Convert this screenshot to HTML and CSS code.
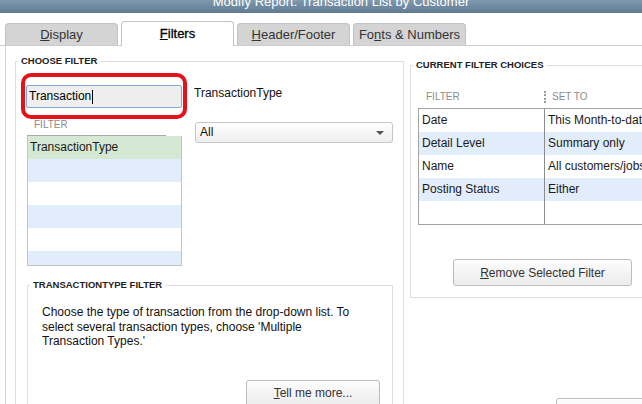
FILE: index.html
```html
<!DOCTYPE html>
<html>
<head>
<meta charset="utf-8" />
<title>Modify Report: Transaction List by Customer</title>
<link rel="stylesheet" href="styles.css">
</head>
<body>
<div class="dialog">
	<div class="titlebar">Modify Report: Transaction List by Customer</div>
	<div class="tabs">
		<div class="tab"><u>D</u>isplay</div>
		<div class="tab active"><u>F</u>ilters</div>
		<div class="tab"><u>H</u>eader/Footer</div>
		<div class="tab">Fo<u>n</u>ts &amp; Numbers</div>
	</div>
	<div class="panel">
		<fieldset class="group choose">
			<legend>Choose Filter</legend>
			<div class="choose_grid">
				<div class="search_mark">
					<div class="search">Transaction<span class="caret"></span></div>
				</div>
				<div class="field_label">TransactionType</div>
				<div class="filter_list">
					<div class="list_head">FILTER</div>
					<ul class="list">
						<li class="sel">TransactionType</li>
						<li class="alt"></li>
						<li></li>
						<li class="alt"></li>
						<li></li>
						<li class="alt"></li>
					</ul>
				</div>
				<div class="select">All<span class="arrow"></span></div>
			</div>
			<fieldset class="group detail">
				<legend>TransactionType Filter</legend>
				<p>Choose the type of transaction from the drop-down list. To select several transaction types, choose 'Multiple Transaction Types.'</p>
				<div class="btn_row"><button class="btn more"><u>T</u>ell me more...</button></div>
			</fieldset>
		</fieldset>
		<div class="right_col">
			<fieldset class="group current">
				<legend>Current Filter Choices</legend>
				<div class="cur_head">
					<div class="c1">FILTER</div>
					<div class="c2">SET TO</div>
				</div>
				<div class="cur_table">
					<div class="row"><div class="k">Date</div><div class="v">This Month-to-date</div></div>
					<div class="row alt"><div class="k">Detail Level</div><div class="v">Summary only</div></div>
					<div class="row"><div class="k">Name</div><div class="v">All customers/jobs</div></div>
					<div class="row alt"><div class="k">Posting Status</div><div class="v">Either</div></div>
					<div class="row"><div class="k"></div><div class="v"></div></div>
				</div>
				<button class="btn remove"><u>R</u>emove Selected Filter</button>
			</fieldset>
			<button class="btn bottom"></button>
		</div>
	</div>
</div>
</body>
</html>
```
FILE: styles.css
```css
*{box-sizing: border-box;}
html,body{margin: 0;padding: 0;overflow: hidden;}
body{width: 642px;height: 404px;background: #fff;font: normal 12px/1.2 "Liberation Sans", Arial, sans-serif;color: #1a1a1a;}
.dialog{width: 682px;}
.titlebar{height: 13px;overflow: hidden;background: linear-gradient(#7f99ae, #5f7b93);color: #fff;font-size: 13px;line-height: 3px;text-align: center;}

/* tabs */
.tabs{display: flex;align-items: flex-end;gap: 3px;height: 33px;padding-left: 5px;border-bottom: 1px solid #cdcdcd;}
.tab{width: 113px;height: 22px;border: 1px solid #c3c3c3;border-bottom: none;border-radius: 4px 4px 0 0;background: #d4d4d4;text-align: center;font-size: 13px;line-height: 21px;color: #333;}
.tab.active{height: 25px;margin-bottom: -1px;background: #fff;color: #000;line-height: 24px;-webkit-text-stroke: 0.3px #000;}

.panel{display: flex;align-items: flex-start;height: 358px;margin-left: 5px;border-left: 1px solid #d3d3d3;}

/* fieldsets */
.group{margin: 0;padding: 0;min-width: 0;border: 1px solid #dedede;}
.group legend{padding: 0 3px;font-size: 9.5px;font-weight: bold;line-height: 12px;text-transform: uppercase;color: #222;}

.choose{width: 389px;height: 400px;margin: 9px 0 0 9px;padding: 6px 10px 0 5px;}
.choose > legend{margin-left: -3px;}
.choose_grid{display: grid;grid-template-columns: 166px 1fr;column-gap: 7px;}
.search_mark{height: 46px;padding: 8px 1px 7px;border: 4px solid #e3121b;border-radius: 10px;}
.search{height: 23px;padding-left: 2px;border: 1px solid #86a8d4;border-radius: 2px;background: #eeeeee;line-height: 21px;color: #000;}
.caret{display: inline-block;width: 1px;height: 14px;margin-left: 1px;background: #000;vertical-align: middle;}
.field_label{padding-top: 13px;line-height: 14px;color: #111;}

.filter_list{margin-left: 6px;width: 155px;}
.list_head{width: 139px;height: 17px;padding-left: 7px;border-bottom: 1px solid #a9a9a9;font-size: 10px;line-height: 12px;color: #8c8c8c;}
.list{height: 130px;margin: 0;padding: 0;list-style: none;overflow: hidden;border: 1px solid #c4c4c4;border-top: none;}
.list li{height: 23px;padding-left: 2px;line-height: 23px;}
.list li.alt{background: #e2edfb;}
.list li.sel{background: #d5e8d3;}

.select{position: relative;height: 21px;width: 198px;margin: 3px 0 0 1px;padding-left: 4px;border: 1px solid #c6c6c6;border-radius: 3px;background: linear-gradient(#fff, #eeeeee);line-height: 19px;color: #111;}
.arrow{position: absolute;right: 8px;top: 8px;border-left: 4px solid transparent;border-right: 4px solid transparent;border-top: 4px solid #555;}

.detail{width: 366px;height: 200px;margin: 13px 0 0 6px;padding: 14px 12px 0 14px;}
.detail > legend{margin-left: -12px;}
.detail p{max-width: 322px;margin: 0;line-height: 14.5px;color: #111;}
.btn_row{display: flex;justify-content: flex-end;margin-top: 31px;}

.btn{height: 27px;padding: 0;border: 1px solid #bdbdbd;border-radius: 3px;background: linear-gradient(#fdfdfd, #ebebeb);font: 12px "Liberation Sans", Arial, sans-serif;color: #333;}
.more{width: 134px;}

/* right column */
.right_col{display: flex;flex-direction: column;align-items: flex-start;}
.current{width: 262px;margin: 13px 0 0 6px;padding: 17px 0 11px 7px;}
.current > legend{margin-left: -5px;}
.cur_head{display: flex;align-items: center;height: 18px;font-size: 10px;color: #8c8c8c;}
.cur_head .c1{width: 126px;padding-left: 8px;}
.cur_head .c2{height: 12px;padding-left: 6px;border-left: 2px dotted #9a9a9a;line-height: 12px;}
.cur_table{margin-top: 2px;border: 1px solid #a3a3a3;border-right: none;}
.row{display: grid;grid-template-columns: 126px 1fr;height: 23px;line-height: 23px;}
.row.alt{background: #e2edfb;}
.row .k{padding-left: 3px;border-right: 1px solid #8c8c8c;}
.row .v{padding-left: 3px;white-space: nowrap;overflow: hidden;}
.remove{width: 179px;margin: 34px 0 0 35px;}
.bottom{width: 120px;margin: 100px 0 0 152px;}
```
